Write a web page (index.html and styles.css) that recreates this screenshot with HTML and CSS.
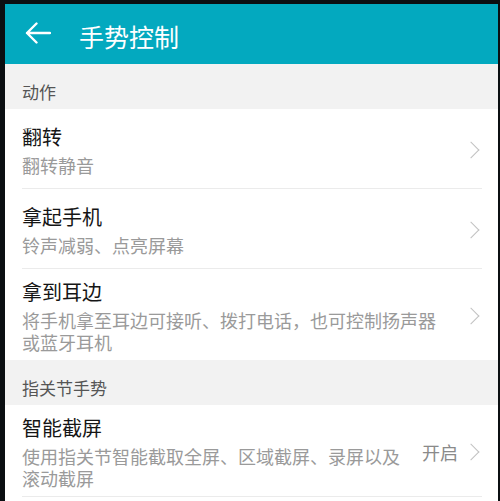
FILE: index.html
```html
<!DOCTYPE html>
<html lang="zh-CN">
<head>
    <meta charset="UTF-8">
    <meta name="viewport" content="width=device-width, initial-scale=1.0">
    <title>手势控制</title>
    <link rel="stylesheet" href="styles.css">
</head>
<body>

    <div class="screen">
        <header class="toolbar">
            <svg class="back" width="26" height="22" viewBox="0 0 26 22">
                <path d="M25 11H2M11.5 1.5L2 11l9.5 9.5" fill="none" stroke="#fff" stroke-width="2.4" stroke-linecap="round" stroke-linejoin="round"/>
            </svg>
            <h1>手势控制</h1>
        </header>

        <div class="section">动作</div>
        <div class="list">
            <div class="item">
                <div class="item-text">
                    <div class="item-title">翻转</div>
                    <div class="item-sub">翻转静音</div>
                </div>
                <div class="item-end"><span class="chevron"></span></div>
            </div>
            <div class="item">
                <div class="item-text">
                    <div class="item-title">拿起手机</div>
                    <div class="item-sub">铃声减弱、点亮屏幕</div>
                </div>
                <div class="item-end"><span class="chevron"></span></div>
            </div>
            <div class="item last">
                <div class="item-text">
                    <div class="item-title">拿到耳边</div>
                    <div class="item-sub">将手机拿至耳边可接听、拨打电话，也可控制扬声器或蓝牙耳机</div>
                </div>
                <div class="item-end"><span class="chevron"></span></div>
            </div>
        </div>

        <div class="section">指关节手势</div>
        <div class="list">
            <div class="item">
                <div class="item-text">
                    <div class="item-title">智能截屏</div>
                    <div class="item-sub">使用指关节智能截取全屏、区域截屏、录屏以及滚动截屏</div>
                </div>
                <div class="item-end"><span class="value">开启</span><span class="chevron"></span></div>
            </div>
        </div>
    </div>

</body>
</html>
```

FILE: styles.css
```css
* {
    margin: 0;
    padding: 0;
    box-sizing: border-box;
}

html, body {
    height: 100%;
}

body {
    background-color: #fff;
    font-family: "Noto Sans CJK SC", "Noto Sans", sans-serif;
}

.screen {
    min-height: 100%;
    border-top: 4px solid #0b0f12;
    border-left: 5px solid #0b0f12;
    border-right: 2px solid #0b0f12;
    background-color: #fff;
}

.toolbar {
    display: flex;
    align-items: center;
    height: 60px;
    padding-left: 20px;
    background-color: #03a9bf;
    color: #fff;
}

.back {
    margin-top: -3px;
}

.toolbar h1 {
    margin-left: 28px;
    font-size: 25px;
    font-weight: normal;
    line-height: 30px;
    padding-top: 3px;
}

.section {
    height: 45px;
    padding: 16px 0 0 17px;
    background-color: #f2f2f2;
    color: #555;
    font-size: 17px;
    line-height: 24px;
}

.list {
    padding: 0 16px 0 17px;
}

.item {
    display: flex;
    align-items: center;
    min-height: 80px;
    padding: 9px 4px 7px 0;
    border-bottom: 1px solid #ebebeb;
}

.item.last {
    border-bottom: none;
    min-height: 79px;
}

.item-text {
    flex: 1;
}

.item-title {
    color: #151515;
    font-size: 20px;
    line-height: 28px;
}

.item-sub {
    margin-top: 3px;
    color: #9a9a9a;
    font-size: 18px;
    line-height: 22px;
}

.item-end {
    display: flex;
    align-items: center;
    margin-left: 18px;
}

.value {
    margin-right: 10px;
    color: #8a8a8a;
    font-size: 18px;
}

.chevron {
    display: block;
    width: 10px;
    height: 17px;
    position: relative;
}

.chevron::before {
    content: "";
    position: absolute;
    top: 2.5px;
    left: -3px;
    width: 11px;
    height: 11px;
    border-top: 1.5px solid #c2c2c2;
    border-right: 1.5px solid #c2c2c2;
    transform: rotate(45deg);
}
```
